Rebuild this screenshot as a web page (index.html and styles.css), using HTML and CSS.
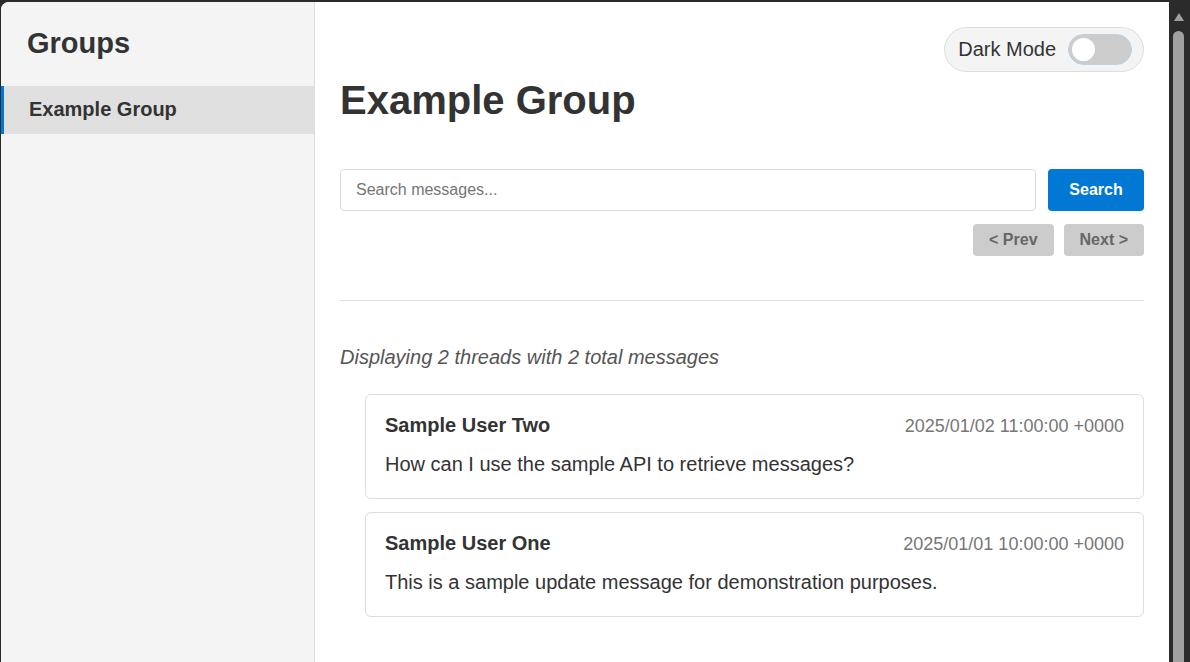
FILE: index.html
```html
<!DOCTYPE html>
<html lang="en">
<head>
<meta charset="utf-8">
<title>Example Group</title>
<link rel="stylesheet" href="styles.css">
</head>
<body>
<div class="window">
  <div class="app">
    <aside class="sidebar">
      <h2 class="sidebar-title">Groups</h2>
      <ul class="group-list">
        <li class="group-item active">Example Group</li>
      </ul>
    </aside>
    <main class="main">
      <div class="topbar">
        <label class="theme-toggle">
          <span class="theme-label">Dark Mode</span>
          <span class="switch"><span class="knob"></span></span>
        </label>
      </div>
      <h1 class="group-title">Example Group</h1>
      <div class="search-row">
        <input class="search-input" type="text" placeholder="Search messages...">
        <button class="btn btn-primary">Search</button>
      </div>
      <div class="pager">
        <button class="btn btn-disabled">&lt; Prev</button>
        <button class="btn btn-disabled">Next &gt;</button>
      </div>
      <hr class="divider">
      <p class="summary">Displaying 2 threads with 2 total messages</p>
      <div class="threads">
        <div class="message">
          <div class="message-head">
            <span class="author">Sample User Two</span>
            <span class="date">2025/01/02 11:00:00 +0000</span>
          </div>
          <div class="message-body">How can I use the sample API to retrieve messages?</div>
        </div>
        <div class="message">
          <div class="message-head">
            <span class="author">Sample User One</span>
            <span class="date">2025/01/01 10:00:00 +0000</span>
          </div>
          <div class="message-body">This is a sample update message for demonstration purposes.</div>
        </div>
      </div>
    </main>
  </div>
  <div class="scrollbar">
    <span class="scroll-arrow"></span>
    <span class="scroll-thumb"></span>
  </div>
</div>
</body>
</html>
```
FILE: styles.css
```css
* { box-sizing: border-box; }
html, body {
  margin: 0;
  height: 100%;
  overflow: hidden;
}
body {
  background: #2b2b2b;
  font-family: "Liberation Sans", Arial, sans-serif;
  color: #333;
}
.window {
  display: flex;
  height: 662px;
  padding: 2px 0 0 1px;
}
.app {
  flex: 1;
  display: flex;
  background: #fff;
  border-top-left-radius: 8px;
  overflow: hidden;
}
.sidebar {
  width: 314px;
  flex: none;
  background: #f4f4f4;
  border-right: 1px solid #ddd;
  padding-top: 25px;
}
.sidebar-title {
  margin: 0 0 26px;
  padding: 0 25px 0 26px;
  font-size: 29px;
  font-weight: bold;
  color: #333;
}
.group-list {
  list-style: none;
  margin: 0;
  padding: 0;
}
.group-item {
  font-size: 20px;
  font-weight: bold;
  padding: 12px 0 13px 25px;
  border-left: 3px solid transparent;
  color: #333;
}
.group-item.active {
  background: #e0e0e0;
  border-left-color: #0078d4;
}
.main {
  flex: 1;
  padding: 25px 25px 25px 25px;
  min-width: 0;
}
.topbar {
  display: flex;
  justify-content: flex-end;
}
.theme-toggle {
  display: flex;
  align-items: center;
  gap: 12px;
  background: #f4f4f4;
  border: 1px solid #ddd;
  border-radius: 23px;
  padding: 6px 11px 6px 13px;
}
.theme-label {
  font-size: 20px;
  color: #333;
}
.switch {
  width: 64px;
  height: 31px;
  border-radius: 16px;
  background: #ccc;
  border: 1px solid #b9d3ec;
  display: flex;
  align-items: center;
  padding-left: 3px;
}
.knob {
  width: 23px;
  height: 23px;
  border-radius: 50%;
  background: #fff;
}
.group-title {
  font-size: 40px;
  font-weight: bold;
  margin: 6px 0 46px;
  color: #333;
}
.search-row {
  display: flex;
  gap: 12px;
}
.search-input {
  flex: 1;
  height: 42px;
  border: 1px solid #ddd;
  border-radius: 4px;
  padding: 0 15px;
  font-family: "Liberation Sans", Arial, sans-serif;
  font-size: 16px;
  color: #333;
  outline: none;
}
.search-input::placeholder { color: #757575; }
.btn {
  font-family: "Liberation Sans", Arial, sans-serif;
  font-size: 16px;
  font-weight: bold;
  border: none;
  border-radius: 4px;
  cursor: pointer;
}
.btn-primary {
  width: 96px;
  height: 42px;
  background: #0078d4;
  color: #fff;
}
.pager {
  display: flex;
  justify-content: flex-end;
  gap: 10px;
  margin-top: 13px;
}
.btn-disabled {
  height: 32px;
  padding: 0 16px;
  background: #ccc;
  color: #666;
  cursor: default;
}
.divider {
  border: none;
  border-top: 1px solid #ddd;
  margin: 44px 0 0;
}
.summary {
  font-size: 20px;
  font-style: italic;
  color: #555;
  margin: 45px 0 25px;
}
.threads {
  display: flex;
  flex-direction: column;
  gap: 13px;
  margin-left: 25px;
}
.message {
  border: 1px solid #ddd;
  border-radius: 6px;
  padding: 19px 19px 22px;
}
.message-head {
  display: flex;
  justify-content: space-between;
  align-items: baseline;
}
.author {
  font-size: 20px;
  font-weight: bold;
  color: #333;
}
.date {
  font-size: 18px;
  color: #777;
}
.message-body {
  font-size: 20px;
  margin-top: 16px;
  color: #333;
}
.scrollbar {
  width: 21px;
  flex: none;
  position: relative;
  background: #2b2b2b;
}
.scroll-arrow {
  position: absolute;
  left: 5px;
  top: 11px;
  width: 0;
  height: 0;
  border-left: 5px solid transparent;
  border-right: 5px solid transparent;
  border-bottom: 8px solid #a0a0a0;
}
.scroll-thumb {
  position: absolute;
  left: 4px;
  top: 29px;
  width: 11px;
  bottom: 0;
  background: #a0a0a0;
  border-radius: 6px 6px 0 0;
}
```
